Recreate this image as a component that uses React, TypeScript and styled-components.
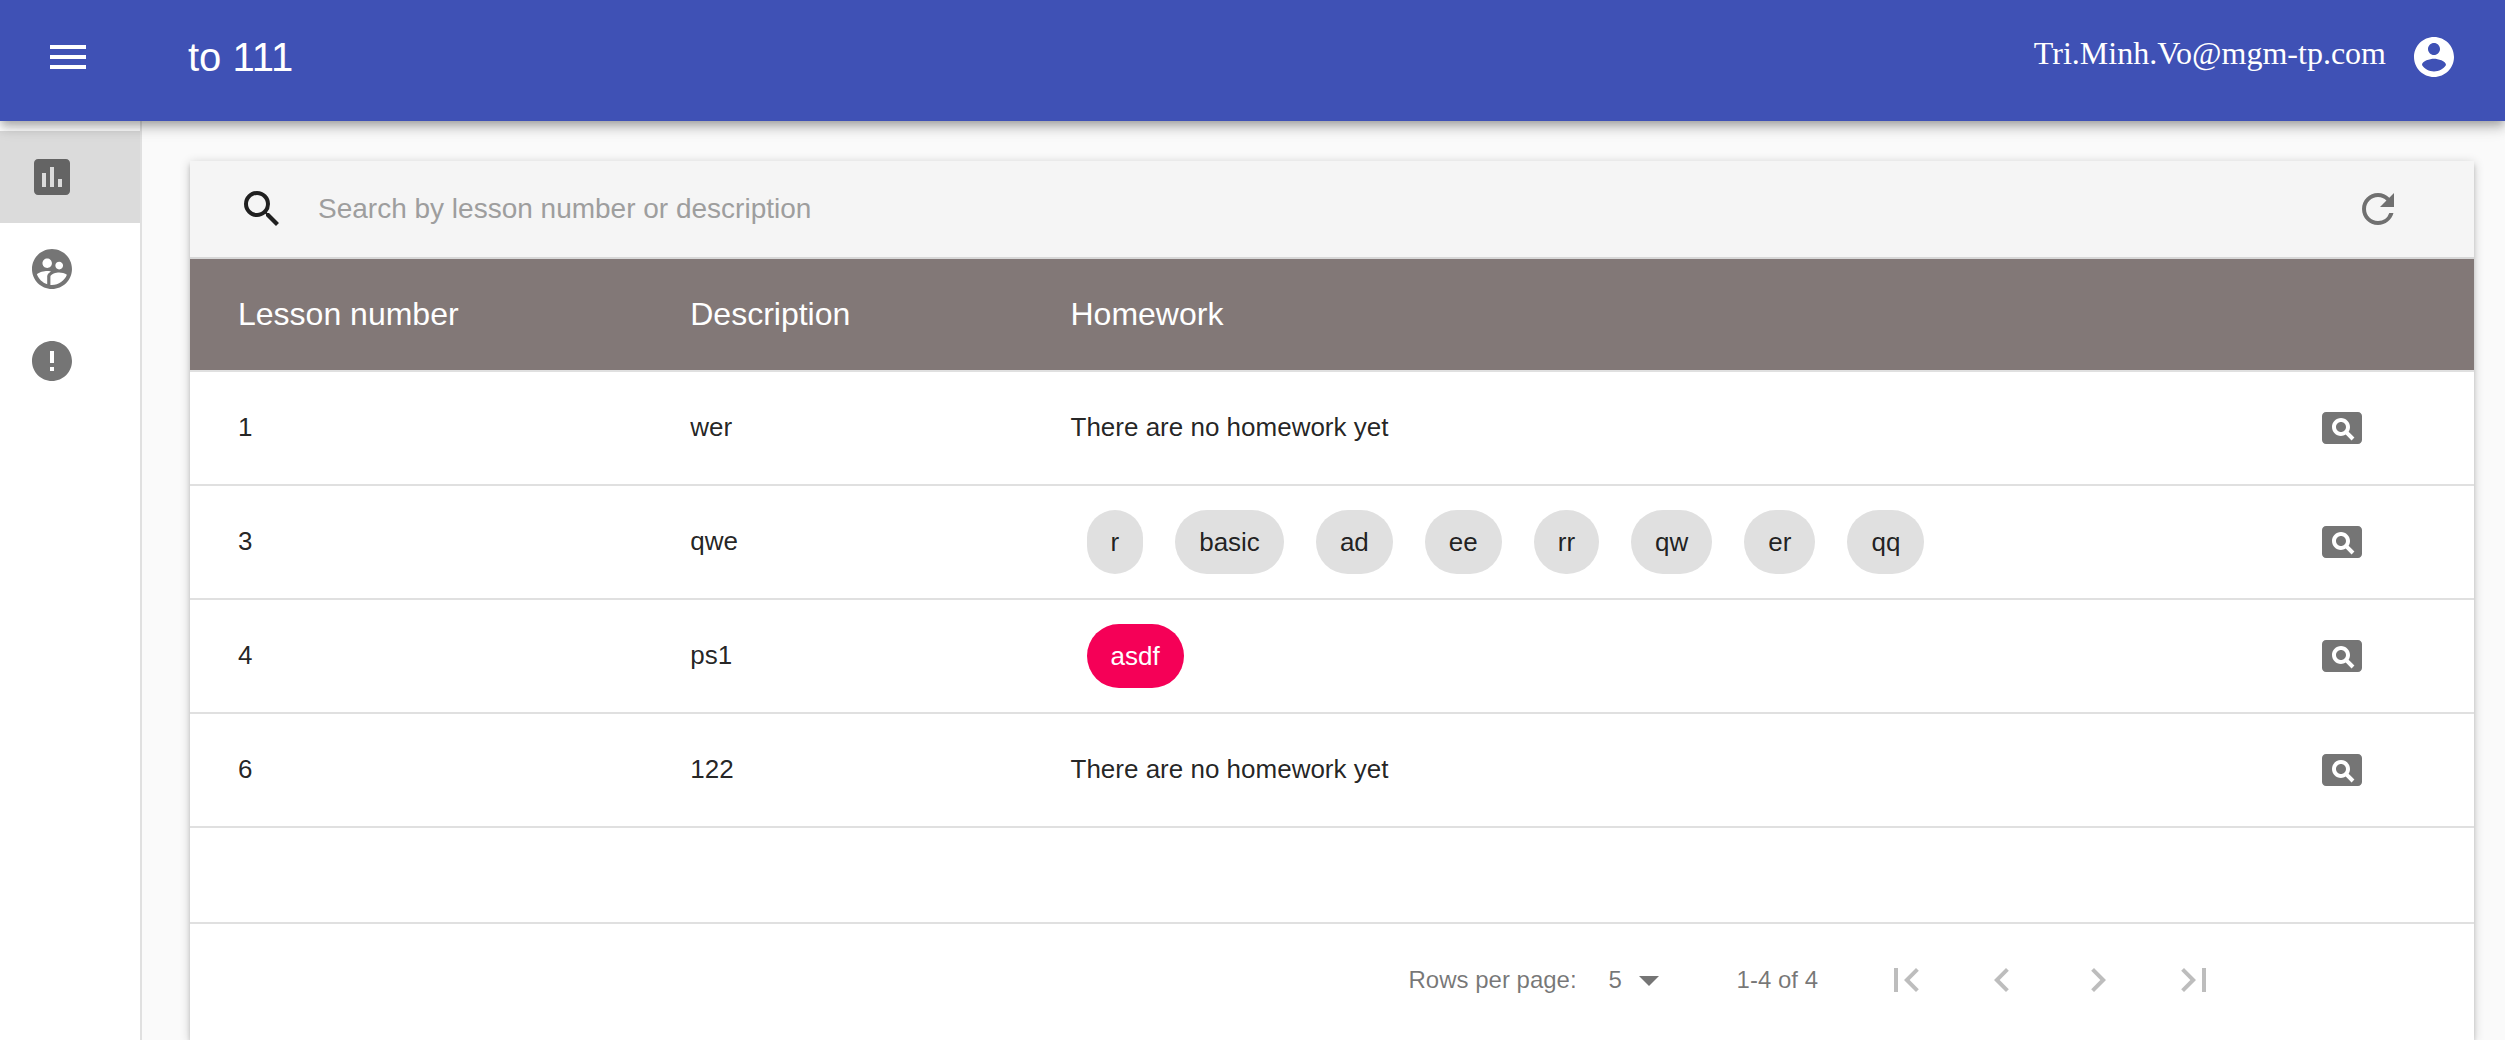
import React, { useState } from 'react';
import styled, { createGlobalStyle, css } from 'styled-components';
import {
  MdArrowDropDown,
  MdAssessment,
  MdChevronLeft,
  MdChevronRight,
  MdError,
  MdFirstPage,
  MdLastPage,
  MdMenu,
  MdRefresh,
  MdSearch,
} from 'react-icons/md';

const sans = '"Liberation Sans", Arial, sans-serif';
const serif = '"Liberation Serif", "Times New Roman", serif';

const GlobalStyle = createGlobalStyle`
  *, *::before, *::after { box-sizing: border-box; }
  body {
    margin: 0;
    background: #fafafa;
    color: rgba(0, 0, 0, 0.87);
    font-family: ${sans};
    font-size: 26px;
  }
`;

const Page = styled.div`
  display: flex;
  flex-direction: column;
  min-height: 100vh;
`;

const AppBar = styled.header`
  position: relative;
  z-index: 1;
  display: flex;
  align-items: center;
  min-height: 121px;
  padding: 0 23px 7px 20px;
  background: #3f51b5;
  color: #fff;
  box-shadow:
    0 4px 8px -2px rgba(0, 0, 0, 0.2),
    0 8px 10px 0 rgba(0, 0, 0, 0.14),
    0 2px 20px 0 rgba(0, 0, 0, 0.12);
`;

const Title = styled.h1`
  flex: 1;
  margin: 0 0 0 72px;
  font-size: 40px;
  font-weight: 400;
  line-height: 48px;
`;

const User = styled.div`
  font-family: ${serif};
  font-size: 32px;
  white-space: nowrap;
`;

const IconButton = styled.button`
  display: inline-flex;
  flex: none;
  align-items: center;
  justify-content: center;
  width: 96px;
  height: 96px;
  padding: 0;
  border: 0;
  border-radius: 50%;
  background: transparent;
  color: rgba(0, 0, 0, 0.54);
  font-size: 48px;
  vertical-align: middle;
  cursor: pointer;

  ${AppBar} & {
    color: inherit;
  }

  &:disabled {
    color: rgba(0, 0, 0, 0.26);
    cursor: default;
  }
`;

const Glyph = styled.svg.attrs({ viewBox: '0 0 24 24', 'aria-hidden': true })`
  width: 1em;
  height: 1em;
  fill: currentColor;
`;

const Body = styled.div`
  display: flex;
  flex: 1;
`;

const Sidebar = styled.nav`
  flex: none;
  width: 142px;
  padding-top: 10px;
  border-right: 2px solid #e0e0e0;
  background: #fff;
`;

const NavLink = styled.a<{ $selected?: boolean }>`
  display: flex;
  align-items: center;
  height: 92px;
  padding-left: 28px;
  background: ${(p) => (p.$selected ? 'rgba(0, 0, 0, 0.14)' : 'transparent')};
  color: rgba(0, 0, 0, 0.54);
  font-size: 48px;
`;

const Main = styled.main`
  display: flex;
  flex: 1;
  min-width: 0;
  padding: 40px 31px 0 48px;
`;

const Card = styled.section`
  flex: 1;
  min-width: 0;
  background: #fff;
  box-shadow:
    0 2px 10px 0 rgba(0, 0, 0, 0.2),
    0 4px 4px 0 rgba(0, 0, 0, 0.14),
    0 6px 2px -4px rgba(0, 0, 0, 0.12);
`;

const SearchBar = styled.div`
  display: flex;
  align-items: center;
  height: 98px;
  padding: 0 48px;
  border-bottom: 2px solid #d7d7d7;
  background: #f5f5f5;
`;

const SearchLabel = styled.label`
  display: flex;
  margin-right: 32px;
  color: rgba(0, 0, 0, 0.87);
  font-size: 48px;
`;

const SearchInput = styled.input`
  flex: 1;
  min-width: 0;
  padding: 0;
  border: 0;
  outline: 0;
  background: transparent;
  color: inherit;
  font: 28px ${sans};

  &::placeholder {
    color: #9e9e9e;
    opacity: 1;
  }
`;

const Table = styled.table`
  width: 100%;
  border-collapse: separate;
  border-spacing: 0;
  table-layout: fixed;
`;

const Col = styled.col<{ $width?: string }>`
  width: ${(p) => p.$width ?? 'auto'};
`;

const cell = css`
  padding: 0 48px;
  border-bottom: 2px solid #e0e0e0;
  text-align: left;
`;

const HeadCell = styled.th`
  ${cell}
  height: 113px;
  background: #827877;
  color: #fff;
  font-size: 32px;
  font-weight: 400;
`;

const Cell = styled.td`
  ${cell}
  height: 114px;
`;

const TextCell = styled(Cell)`
  padding-bottom: 2px;
`;

const ActionCell = styled(Cell)`
  padding: 0 84px 0 0;
  text-align: right;
`;

const EmptyCell = styled(Cell)`
  height: 96px;
`;

const Chips = styled.div`
  display: flex;
  flex-wrap: wrap;
  gap: 32px;
  padding-left: 16px;
`;

const Chip = styled.span<{ $accent?: boolean }>`
  height: 64px;
  padding: 0 24px;
  border-radius: 32px;
  background: ${(p) => (p.$accent ? '#f50057' : '#e0e0e0')};
  color: ${(p) => (p.$accent ? '#fff' : 'inherit')};
  line-height: 64px;
`;

const Pagination = styled.footer`
  display: flex;
  align-items: center;
  justify-content: flex-end;
  height: 112px;
  padding-right: 232px;
  color: rgba(0, 0, 0, 0.54);
  font-size: 24px;
`;

const SelectBox = styled.div`
  position: relative;
  margin: 0 64px 0 32px;
`;

const Select = styled.select`
  display: block;
  width: 64px;
  height: 48px;
  padding: 0 0 2px;
  border: 0;
  outline: 0;
  appearance: none;
  background: transparent;
  color: inherit;
  font: 24px ${sans};
`;

const SelectArrow = styled(MdArrowDropDown)`
  position: absolute;
  top: 0;
  right: 0;
  font-size: 48px;
  pointer-events: none;
`;

const PageButtons = styled.div`
  display: flex;
  margin-left: 40px;
`;

function AccountIcon() {
  return (
    <Glyph>
      <path d="M12 2C6.48 2 2 6.48 2 12s4.48 10 10 10 10-4.48 10-10S17.52 2 12 2zm0 3c1.66 0 3 1.34 3 3s-1.34 3-3 3-3-1.34-3-3 1.34-3 3-3zm0 14.2c-2.5 0-4.71-1.28-6-3.22.03-1.99 4-3.08 6-3.08 1.99 0 5.97 1.09 6 3.08-1.29 1.94-3.5 3.22-6 3.22z" />
    </Glyph>
  );
}

function MembersIcon() {
  return (
    <Glyph>
      <path d="M11.99 2c-5.52 0-10 4.48-10 10s4.48 10 10 10 10-4.48 10-10-4.48-10-10-10zm3.61 6.34c1.07 0 1.93.86 1.93 1.93 0 1.07-.86 1.93-1.93 1.93-1.07 0-1.93-.86-1.93-1.93-.01-1.07.86-1.93 1.93-1.93zm-6-1.58c1.3 0 2.36 1.06 2.36 2.36 0 1.3-1.06 2.36-2.36 2.36s-2.36-1.06-2.36-2.36c0-1.31 1.05-2.36 2.36-2.36zm0 9.13v3.75c-2.4-.75-4.3-2.6-5.14-4.96 1.05-1.12 3.67-1.69 5.14-1.69.53 0 1.2.08 1.9.22-1.64.87-1.9 2.02-1.9 2.68zM11.99 20c-.27 0-.53-.01-.79-.04v-4.07c0-1.42 2.94-2.13 4.4-2.13 1.07 0 2.92.39 3.84 1.15-1.17 2.97-4.06 5.09-7.45 5.09z" />
    </Glyph>
  );
}

function PageviewIcon() {
  return (
    <Glyph>
      <path d="M11.5 9C10.12 9 9 10.12 9 11.5s1.12 2.5 2.5 2.5 2.5-1.12 2.5-2.5S12.88 9 11.5 9zM20 4H4c-1.1 0-2 .9-2 2v12c0 1.1.9 2 2 2h16c1.1 0 2-.9 2-2V6c0-1.1-.9-2-2-2zm-3.21 14.21l-2.91-2.91c-.69.44-1.51.7-2.39.7C9.01 16 7 13.99 7 11.5S9.01 7 11.5 7 16 9.01 16 11.5c0 .88-.26 1.69-.7 2.39l2.91 2.9-1.42 1.42z" />
    </Glyph>
  );
}

interface Homework {
  name: string;
  accent?: boolean;
}

interface Lesson {
  number: number;
  description: string;
  homework: Homework[];
}

const lessons: Lesson[] = [
  { number: 1, description: 'wer', homework: [] },
  {
    number: 3,
    description: 'qwe',
    homework: ['r', 'basic', 'ad', 'ee', 'rr', 'qw', 'er', 'qq'].map((name) => ({ name })),
  },
  { number: 4, description: 'ps1', homework: [{ name: 'asdf', accent: true }] },
  { number: 6, description: '122', homework: [] },
];

function LessonRow({ lesson }: { lesson: Lesson }) {
  return (
    <tr>
      <TextCell>{lesson.number}</TextCell>
      <TextCell>{lesson.description}</TextCell>
      {lesson.homework.length === 0 ? (
        <TextCell>There are no homework yet</TextCell>
      ) : (
        <Cell>
          <Chips>
            {lesson.homework.map((item) => (
              <Chip key={item.name} $accent={item.accent}>
                {item.name}
              </Chip>
            ))}
          </Chips>
        </Cell>
      )}
      <ActionCell>
        <IconButton type="button" aria-label="View lesson">
          <PageviewIcon />
        </IconButton>
      </ActionCell>
    </tr>
  );
}

export default function App() {
  const [query, setQuery] = useState('');
  const [rowsPerPage, setRowsPerPage] = useState('5');
  const visible = lessons.filter((l) => `${l.number} ${l.description}`.includes(query));

  return (
    <Page>
      <GlobalStyle />
      <AppBar>
        <IconButton type="button" aria-label="Open menu">
          <MdMenu />
        </IconButton>
        <Title>to 111</Title>
        <User>
          Tri.Minh.Vo@mgm-tp.com
          <IconButton type="button" aria-label="Account">
            <AccountIcon />
          </IconButton>
        </User>
      </AppBar>
      <Body>
        <Sidebar>
          <NavLink href="#lessons" aria-label="Lessons" $selected>
            <MdAssessment />
          </NavLink>
          <NavLink href="#members" aria-label="Members">
            <MembersIcon />
          </NavLink>
          <NavLink href="#issues" aria-label="Issues">
            <MdError />
          </NavLink>
        </Sidebar>
        <Main>
          <Card>
            <SearchBar>
              <SearchLabel htmlFor="search" aria-label="Search">
                <MdSearch />
              </SearchLabel>
              <SearchInput
                id="search"
                type="text"
                placeholder="Search by lesson number or description"
                value={query}
                onChange={(e) => setQuery(e.target.value)}
              />
              <IconButton type="button" aria-label="Refresh">
                <MdRefresh />
              </IconButton>
            </SearchBar>
            <Table>
              <colgroup>
                <Col $width="19.8%" />
                <Col $width="16.65%" />
                <Col />
                <Col $width="10%" />
              </colgroup>
              <thead>
                <tr>
                  <HeadCell>Lesson number</HeadCell>
                  <HeadCell>Description</HeadCell>
                  <HeadCell>Homework</HeadCell>
                  <HeadCell aria-label="Actions" />
                </tr>
              </thead>
              <tbody>
                {visible.map((lesson) => (
                  <LessonRow key={lesson.number} lesson={lesson} />
                ))}
                <tr>
                  <EmptyCell colSpan={4} />
                </tr>
              </tbody>
            </Table>
            <Pagination>
              <label htmlFor="rows">Rows per page:</label>
              <SelectBox>
                <Select id="rows" value={rowsPerPage} onChange={(e) => setRowsPerPage(e.target.value)}>
                  <option>5</option>
                  <option>10</option>
                  <option>25</option>
                </Select>
                <SelectArrow />
              </SelectBox>
              <span>1-4 of 4</span>
              <PageButtons>
                <IconButton type="button" aria-label="First page" disabled>
                  <MdFirstPage />
                </IconButton>
                <IconButton type="button" aria-label="Previous page" disabled>
                  <MdChevronLeft />
                </IconButton>
                <IconButton type="button" aria-label="Next page" disabled>
                  <MdChevronRight />
                </IconButton>
                <IconButton type="button" aria-label="Last page" disabled>
                  <MdLastPage />
                </IconButton>
              </PageButtons>
            </Pagination>
          </Card>
        </Main>
      </Body>
    </Page>
  );
}
